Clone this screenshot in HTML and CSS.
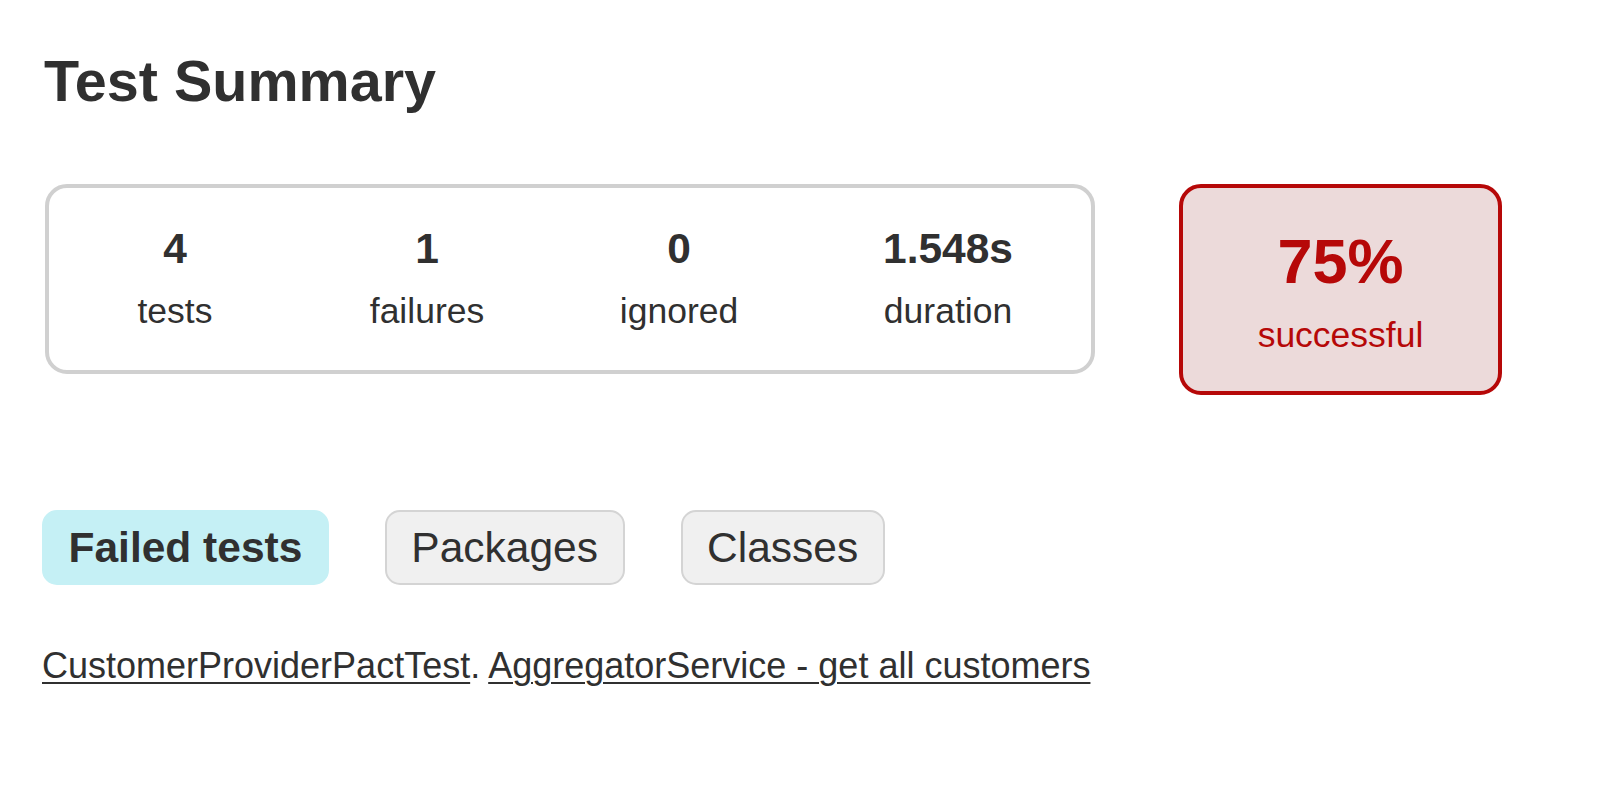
FILE: index.html
```html
<!DOCTYPE html>
<html lang="en">
<head>
<meta charset="utf-8">
<title>Test results - Test Summary</title>
<link rel="stylesheet" href="styles.css">
</head>
<body>
<div class="content">
  <h1 class="title">Test Summary</h1>
  <div class="summary">
    <div class="summary-group">
      <div class="info-box">
        <div class="counter">4</div>
        <div class="label">tests</div>
      </div>
      <div class="info-box">
        <div class="counter">1</div>
        <div class="label">failures</div>
      </div>
      <div class="info-box">
        <div class="counter">0</div>
        <div class="label">ignored</div>
      </div>
      <div class="info-box">
        <div class="counter">1.548s</div>
        <div class="label">duration</div>
      </div>
    </div>
    <div class="success-rate failures">
      <div class="percent">75%</div>
      <div class="label">successful</div>
    </div>
  </div>
  <ul class="tab-links">
    <li class="tab selected">Failed tests</li>
    <li class="tab">Packages</li>
    <li class="tab">Classes</li>
  </ul>
  <div class="failed-list">
    <a class="link" href="#">CustomerProviderPactTest</a>. <a class="link" href="#">AggregatorService - get all customers</a>
  </div>
</div>
</body>
</html>
```

FILE: styles.css
```css
html, body {
  margin: 0;
  padding: 0;
  background: #ffffff;
}

body {
  font-family: "Liberation Sans", Arial, sans-serif;
  font-size: 35.5px;
  color: #303030;
}

.content {
  padding: 49px 0 0 42px;
}

.title {
  margin: 0 0 71px 2px;
  font-size: 57.5px;
  line-height: 64px;
  font-weight: bold;
}

.summary {
  display: flex;
  align-items: flex-start;
  margin-left: 3px;
}

.summary-group {
  box-sizing: border-box;
  width: 1050px;
  height: 189.5px;
  border: 4px solid #d0d0d0;
  border-radius: 22px;
  display: grid;
  grid-template-columns: 252px 252px 252px 1fr;
  padding-top: 37px;
}

.info-box {
  text-align: center;
}

.counter {
  font-size: 42.5px;
  line-height: 48px;
  font-weight: bold;
  margin-bottom: 18px;
}

.label {
  line-height: 40px;
}

.success-rate {
  box-sizing: border-box;
  width: 323px;
  height: 211px;
  margin-left: 84px;
  border: 4px solid #b60808;
  border-radius: 22px;
  background: #ecdada;
  color: #b60808;
  text-align: center;
  padding-top: 37px;
}

.percent {
  font-size: 63px;
  line-height: 72px;
  font-weight: bold;
  margin-bottom: 18px;
}

.tab-links {
  list-style: none;
  margin: 115px 0 0 0;
  padding: 0;
  display: flex;
  gap: 56px;
}

.tab {
  font-size: 42.5px;
  line-height: 49px;
  padding: 11px 24.5px;
  border: 2px solid #d4d4d4;
  border-radius: 15px;
  background: #f0f0f0;
}

.tab.selected {
  background: #c5f0f5;
  border-color: #c5f0f5;
  font-weight: bold;
}

.failed-list {
  margin-top: 61px;
  font-size: 36px;
  line-height: 40px;
}

.link {
  color: #303030;
  text-decoration: underline;
  text-decoration-thickness: 2px;
  text-underline-offset: 4px;
}
```
